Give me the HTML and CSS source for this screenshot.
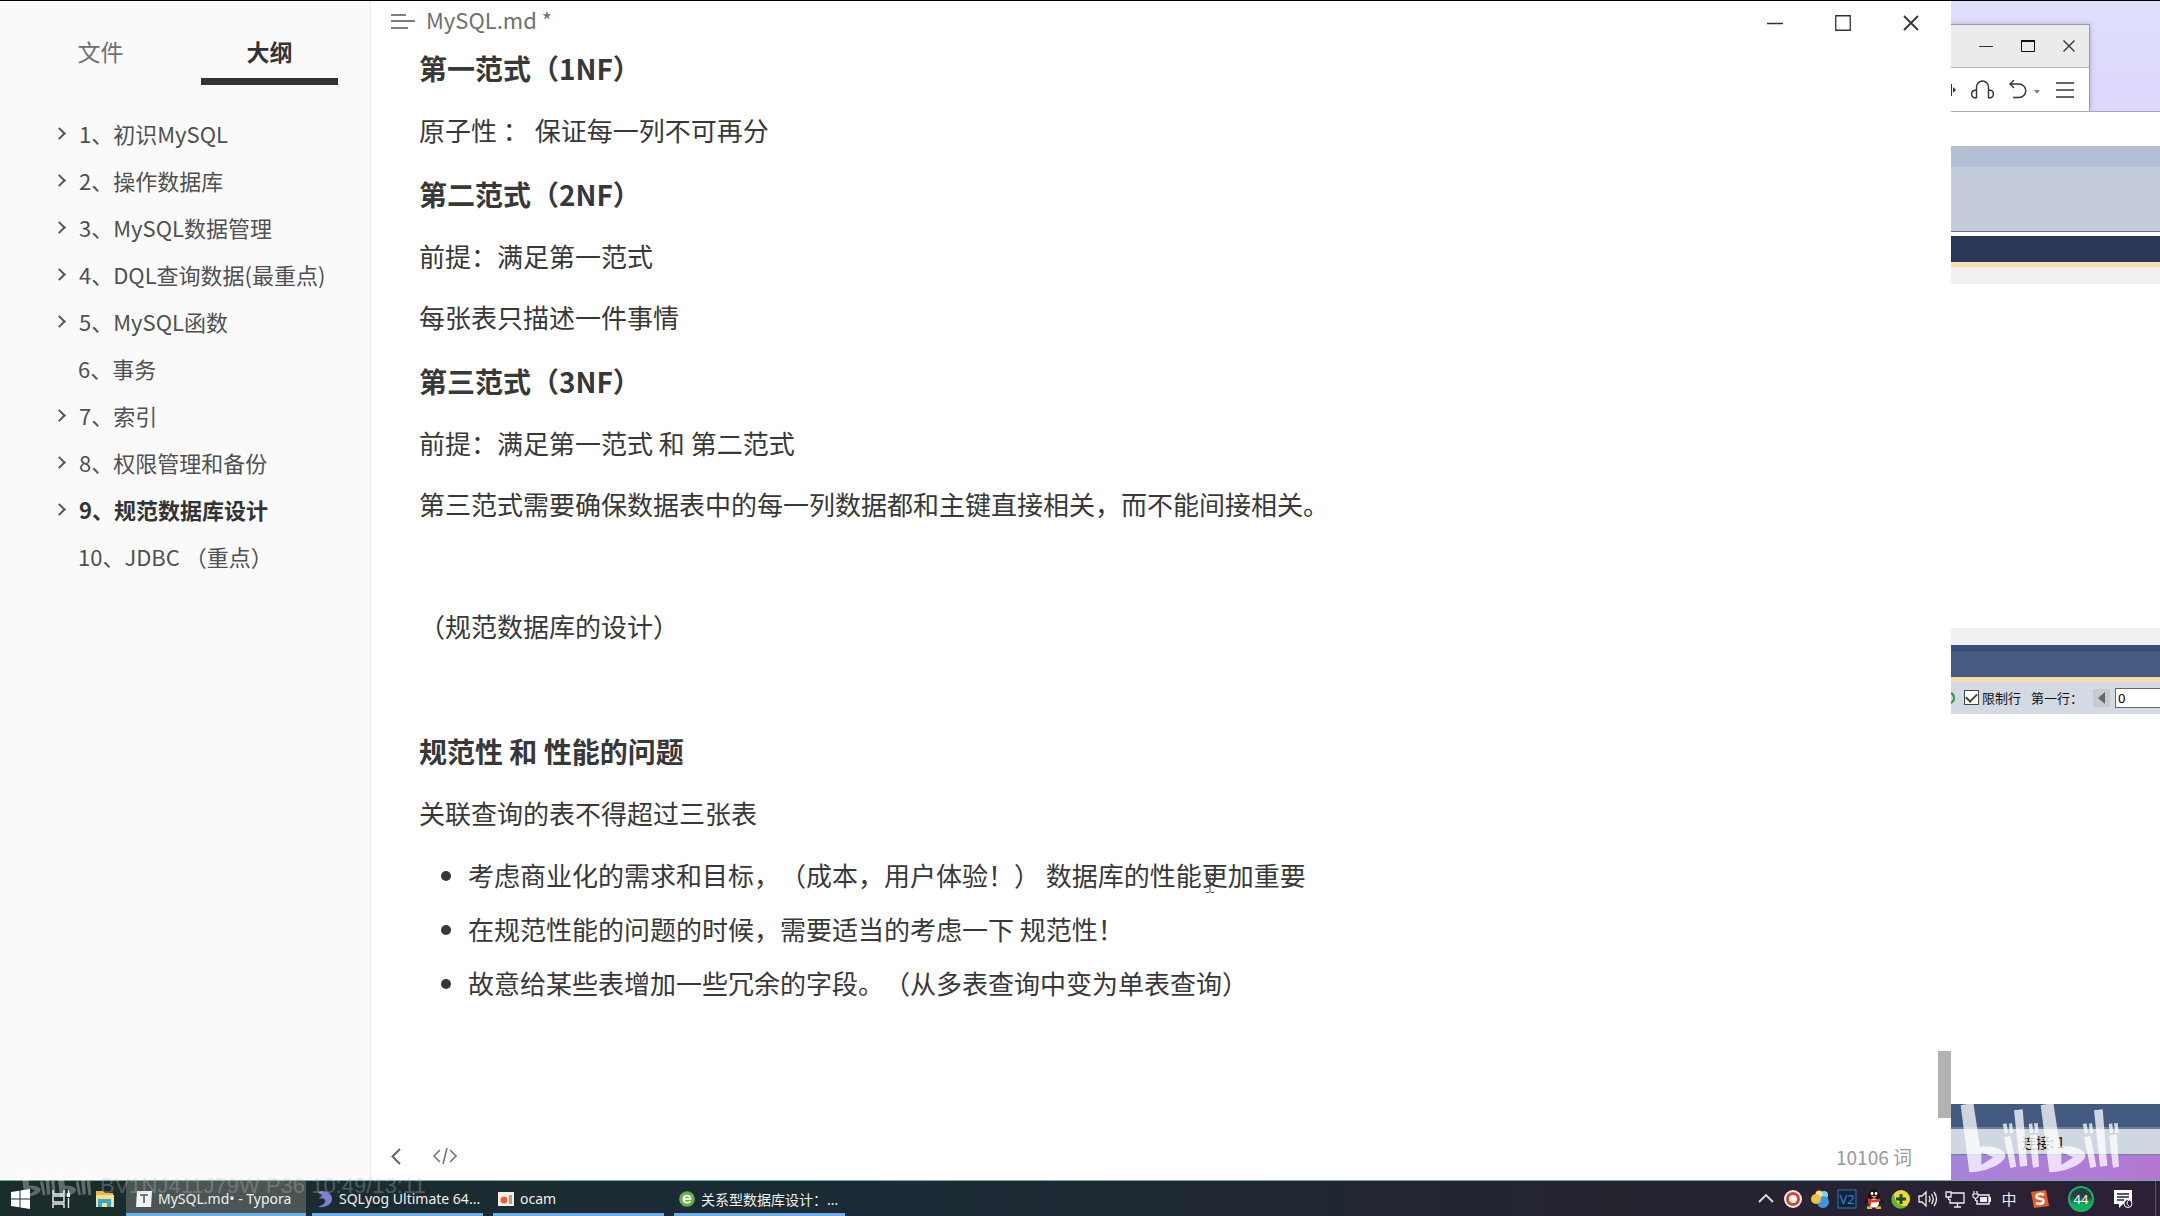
FILE: index.html
```html
<!DOCTYPE html>
<html lang="zh-CN">
<head>
<meta charset="utf-8">
<title>MySQL.md* - Typora</title>
<link rel="stylesheet" href="styles.css">
</head>
<body>
<div class="screen">
  <aside class="sidebar">
    <div class="tabs">
      <button class="tab">文件</button>
      <button class="tab tab-active">大纲</button>
    </div>
    <nav class="outline">
      <a class="item branch" href="#">1、初识MySQL</a>
      <a class="item branch" href="#">2、操作数据库</a>
      <a class="item branch" href="#">3、MySQL数据管理</a>
      <a class="item branch" href="#">4、DQL查询数据(最重点)</a>
      <a class="item branch" href="#">5、MySQL函数</a>
      <a class="item" href="#">6、事务</a>
      <a class="item branch" href="#">7、索引</a>
      <a class="item branch" href="#">8、权限管理和备份</a>
      <a class="item branch current" href="#">9、规范数据库设计</a>
      <a class="item" href="#">10、JDBC （重点）</a>
    </nav>
  </aside>

  <main class="editor">
    <header class="titlebar">
      <button class="menu" aria-label="菜单"><svg width="24" height="16" viewBox="0 0 24 16"><path d="M0 2H15M0 8H24M0 15H17" stroke="#555" stroke-width="1.5"/></svg></button>
      <span class="filename">MySQL.md *</span>
      <div class="win-buttons">
        <button aria-label="最小化"><svg width="16" height="16" viewBox="0 0 16 16"><path d="M0 8.5H16" stroke="#333" stroke-width="1.5"/></svg></button>
        <button aria-label="最大化"><svg width="16" height="16" viewBox="0 0 16 16"><path d="M.75 .75H15.25V15.25H.75Z" fill="none" stroke="#333" stroke-width="1.3"/></svg></button>
        <button aria-label="关闭"><svg width="16" height="16" viewBox="0 0 16 16"><path d="M1 1L15 15M15 1L1 15" stroke="#333" stroke-width="1.8"/></svg></button>
      </div>
    </header>
    <article class="doc">
      <h4>第一范式（1NF）</h4>
      <p>原子性 ： 保证每一列不可再分</p>
      <h4>第二范式（2NF）</h4>
      <p>前提：满足第一范式</p>
      <p>每张表只描述一件事情</p>
      <h4>第三范式（3NF）</h4>
      <p>前提：满足第一范式 和 第二范式</p>
      <p>第三范式需要确保数据表中的每一列数据都和主键直接相关，而不能间接相关。</p>
      <p></p>
      <p>（规范数据库的设计）</p>
      <p></p>
      <h4>规范性 和 性能的问题</h4>
      <p>关联查询的表不得超过三张表</p>
      <ul>
        <li>考虑商业化的需求和目标，（成本，用户体验！） 数据库的性能<span class="caret-host">更<svg class="ibeam" width="8" height="18" viewBox="0 0 8 18"><path d="M0 .5H3L4 1.5L5 .5H8M4 1V17M0 17.5H3L4 16.5L5 17.5H8" fill="none" stroke="#444"/></svg></span>加重要</li>
        <li>在规范性能的问题的时候，需要适当的考虑一下 规范性！</li>
        <li>故意给某些表增加一些冗余的字段。（从多表查询中变为单表查询）</li>
      </ul>
    </article>
    <footer class="editor-foot">
      <button aria-label="返回"><svg width="10" height="17" viewBox="0 0 10 17"><path d="M9 1L1.500 8.500L9 16" fill="none" stroke="#666" stroke-width="2"/></svg></button>
      <button aria-label="源代码模式"><svg width="24" height="18" viewBox="0 0 24 18"><path d="M7 3L1 9L7 15M17 3L23 9L17 15M14 1L10 17" fill="none" stroke="#777" stroke-width="1.6"/></svg></button>
      <span class="words">10106 词</span>
    </footer>
    <div class="thumb"></div>
  </main>

  <section class="desktop">
    <div class="wallpaper">
      <div class="mini">
        <div class="mini-title">
          <svg class="mini-edge" width="3" height="8" viewBox="0 0 3 8"><path d="M0 1H1.500V4H0" fill="none" stroke="#222" stroke-width="1.500"/></svg>
          <button aria-label="最小化"><svg width="14" height="12" viewBox="0 0 14 12"><path d="M0 6.500H14" stroke="#333"/></svg></button>
          <button aria-label="最大化"><svg width="14" height="12" viewBox="0 0 14 12"><path d="M.5 1H13.500V11.500H.5Z" fill="none" stroke="#111"/><path d="M0 1H14" stroke="#111" stroke-width="2"/></svg></button>
          <button aria-label="关闭"><svg width="12" height="12" viewBox="0 0 12 12"><path d="M.5 .5L11.500 11.500M11.500 .5L.5 11.500" stroke="#333" stroke-width="1.400"/></svg></button>
        </div>
        <div class="mini-tools">
          <svg class="mini-edge" width="5" height="12" viewBox="0 0 5 12"><path d="M.5 0V12" stroke="#333"/><path d="M2 3L5 6L2 9Z" fill="#333"/></svg>
          <button aria-label="耳机"><svg width="23" height="20" viewBox="0 0 23 20"><path d="M5.500 18V7A6 6 0 0 1 17.500 7V18M5.500 10C-1 10 -1 18 5.500 18M17.500 10C24 10 24 18 17.500 18" fill="none" stroke="#333" stroke-width="1.400"/></svg></button>
          <button aria-label="撤销"><svg width="32" height="19" viewBox="0 0 32 19"><path d="M5 0L1 4L5 8M1 4H10A6.700 6.700 0 0 1 10 17.500H4" fill="none" stroke="#333" stroke-width="1.400"/><path d="M25 10H31L28 13.500Z" fill="#777"/></svg></button>
          <button aria-label="菜单"><svg width="18" height="16" viewBox="0 0 18 16"><path d="M0 1H18M0 8H18M0 15H18" stroke="#333" stroke-width="1.400"/></svg></button>
        </div>
      </div>
    </div>
    <div class="band white-band"></div>
    <div class="band menu-band"></div>
    <div class="band tool-band"></div>
    <div class="band navy-band"></div>
    <div class="band pale-band"></div>
    <div class="blank query"></div>
    <div class="band pale-band"></div>
    <div class="band blue-band"></div>
    <form class="limit">
      <svg class="refresh" width="4" height="12" viewBox="0 0 4 12"><path d="M0 1C4 3 4 9 0 11" fill="none" stroke="#2f9a45" stroke-width="2"/></svg>
      <label class="check"><input type="checkbox" checked>限制行</label>
      <label for="first-row" class="first">第一行：</label>
      <button type="button" aria-label="上一页"><svg width="7" height="12" viewBox="0 0 7 12"><path d="M7 0V12L0 6Z" fill="#666"/></svg></button>
      <input id="first-row" type="text" value="0">
    </form>
    <div class="blank result"></div>
    <div class="band blue-foot"></div>
    <div class="status"><span>连接: 1</span></div>
    <div class="band purple-band"></div>
    <svg class="brand" viewBox="480 219 480 216" aria-label="bilibili">
      <g id="brand-half" fill="#fff">
        <path fill-rule="evenodd" d="M482 229L520 221L540 353C572 349 612 358 616 378C618 402 562 428 508 430ZM544 369V408L580 385Z"/>
        <path d="M612 325L632 321L649 413L631 417ZM642 244L668 241L682 410L660 413ZM687 320L710 316L717 413L699 416Z"/>
        <path d="M608 285L620 283L624 312L614 314ZM627 284L636 282L640 312L630 313ZM686 285L697 283L699 311L690 313ZM702 283L713 282L716 311L706 313Z"/>
      </g>
      <use href="#brand-half" x="240"/>
    </svg>
  </section>
</div>

<footer class="taskbar">
  <button class="sys" aria-label="开始"><svg width="20" height="20" viewBox="0 0 20 20"><path d="M0 3L8.500 1.800V9.500H0ZM9.500 1.600L19 0V9.500H9.500ZM0 10.500H8.500V18.200L0 17ZM9.500 10.500H19V20L9.500 18.400Z" fill="#fff"/></svg></button>
  <button class="sys" aria-label="任务视图"><svg width="20" height="20" viewBox="0 0 20 20"><path d="M2 1V5H13V1M2 19V15H13V19M2 7H13V13H2ZM17.500 1V4M17.500 9V19" fill="none" stroke="#eee" stroke-width="1.400"/><path d="M16 4H19V8H16Z" fill="#eee"/></svg></button>
  <button class="sys" aria-label="文件资源管理器"><svg width="20" height="20" viewBox="0 0 20 20"><path d="M1 2H8L10 4H18V18H1Z" fill="#e9b84c"/><path d="M1 6H19V18H1Z" fill="#fbe08a"/><path d="M3 18V10H16V18H12V14H7V18Z" fill="#35a5dc"/></svg></button>
  <button class="task task-active"><svg width="16" height="16" viewBox="0 0 16 16"><path d="M1 0H16L15 16H0Z" fill="#f3f3f3"/><path d="M4 4H12M8 4V12" stroke="#555" stroke-width="1.500"/></svg><span>MySQL.md• - Typora</span></button>
  <button class="task"><svg width="16" height="18" viewBox="0 0 16 18"><path d="M1 2C8 -1 15 3 15 9C15 14 9 18 1 17C6 15 9 13 8 10C7 8 4 8 2 9C3 7 5 6 5 5C4 4 2 4 1 2Z" fill="#7f7fd6"/></svg><span>SQLyog Ultimate 64...</span></button>
  <button class="task"><svg width="16" height="14" viewBox="0 0 16 14"><path d="M0 0H16V14H0Z" fill="#f2eeee"/><circle cx="6" cy="8" r="3.500" fill="#e3622a"/><path d="M11 3H14V12H11Z" fill="#d9906c"/></svg><span>ocam</span></button>
  <button class="task"><svg width="16" height="16" viewBox="0 0 16 16"><circle cx="8" cy="8" r="7.800" fill="#62b545"/><path d="M4.500 8H11.500C11.500 3.500 4.500 3.500 4.500 8C4.500 12.500 10 12.500 11.500 10" fill="none" stroke="#fff" stroke-width="1.800"/></svg><span>关系型数据库设计：...</span></button>
  <div class="tray">
    <svg viewBox="0 0 20 20"><path d="M3 13L10 6L17 13" fill="none" stroke="#ddd" stroke-width="1.800"/></svg>
    <svg viewBox="0 0 20 20"><circle cx="10" cy="10" r="9" fill="#eee"/><circle cx="10" cy="10" r="5.500" fill="#fff" stroke="#d8452f" stroke-width="3"/></svg>
    <svg viewBox="0 0 20 20"><circle cx="14" cy="6" r="4" fill="#8cc8f4"/><circle cx="13" cy="13" r="6" fill="#3d95e6"/><circle cx="9" cy="5" r="3.500" fill="#fbe08e"/><circle cx="6" cy="10" r="5" fill="#f2bd4a"/></svg>
    <svg viewBox="0 0 20 20"><path d="M1 1H19V19H1Z" fill="#12233c" stroke="#2e78b8"/><text x="10" y="15" text-anchor="middle" font-size="13" fill="#3787c8">V2</text></svg>
    <svg viewBox="0 0 20 20"><ellipse cx="10" cy="9" rx="6" ry="8.500" fill="#111"/><path d="M4 8L0 14L4 13ZM16 8L20 14L16 13Z" fill="#111"/><ellipse cx="10" cy="14" rx="5" ry="4.500" fill="#fff"/><ellipse cx="8" cy="4.500" rx="1.400" ry="1.800" fill="#fff"/><ellipse cx="12" cy="4.500" rx="1.400" ry="1.800" fill="#fff"/><path d="M7 7H13L10 9Z" fill="#f5a623"/><path d="M3.500 9Q10 12.500 16.500 9V12Q10 14.500 7 13V16H4.500Z" fill="#e0362c"/><path d="M3 17.500Q6 16.500 8.500 18.500L8 20H3ZM17 17.500Q14 16.500 11.500 18.500L12 20H17Z" fill="#f0b040"/></svg>
    <svg viewBox="0 0 20 20"><circle cx="10" cy="10" r="9" fill="#f1d82f"/><path d="M3 4A9 9 0 0 0 16 17C8 18 3 12 3 4Z" fill="#65b32e"/><path d="M10 5V15M5 10H15" stroke="#174d1e" stroke-width="3"/></svg>
    <svg viewBox="0 0 20 20"><path d="M1 7H4L8 3V17L4 13H1ZM11 7Q13 10 11 13M13.500 5Q17 10 13.500 15M16 3Q21 10 16 17" fill="none" stroke="#eee" stroke-width="1.300"/></svg>
    <svg viewBox="0 0 20 20"><path d="M6 4H19V14H5V10M9 18H16M12.500 14V18M1 3H6V8H1ZM3.500 8V11" fill="none" stroke="#eee" stroke-width="1.300"/></svg>
    <svg viewBox="0 0 20 20"><path d="M6 6H17V15H5V11" fill="none" stroke="#eee" stroke-width="1.500"/><path d="M8 8H15V13H8ZM17 8H19V13H17Z" fill="#eee"/><path d="M2 2V5M5 2V5M1 5H6V8L4 9.500H3L1 8ZM3.500 9V12" fill="none" stroke="#eee" stroke-width="1.200"/></svg>
    <span class="ime">中</span>
    <svg class="sogou" viewBox="0 0 20 20"><path d="M1 3L16 1L19 17L4 19Z" fill="#ee5a23"/><path d="M14 5.500C9 4 6 5.500 6.500 8C7 10.500 13.500 9 13.500 12C13.500 15 9 15.500 6 14" fill="none" stroke="#fff" stroke-width="2.600"/></svg>
    <span class="badge">44</span>
    <svg class="notes" viewBox="0 0 20 20"><path d="M1 1H19V15H10L6 19V15H1Z" fill="#fff"/><path d="M4 5H16M4 8H16M4 11H11" stroke="#2a2235" stroke-width="1.300"/><circle cx="15" cy="14.500" r="4" fill="#2a2235" stroke="#fff"/><path d="M16 11Q12 14 16 17" fill="none" stroke="#fff"/></svg>
  </div>
  <div class="stamp">
    <svg viewBox="480 219 480 216" aria-hidden="true"><use href="#brand-half"/><use href="#brand-half" x="240"/></svg>
    <span>BV1NJ411J79W P36 10:49/13:11</span>
  </div>
</footer>
</body>
</html>
```
FILE: styles.css
```css
* { box-sizing: border-box; }

body {
  margin: 0;
  min-height: 100vh;
  display: flex;
  flex-direction: column;
  border-top: 1px solid #000;
  background: #fff;
  color: #383838;
  font-family: "Noto Sans CJK SC", "Noto Sans", sans-serif;
  text-spacing-trim: space-all;
}

button {
  border: 0;
  padding: 0;
  background: none;
  font: inherit;
  color: inherit;
}

svg { display: block; }

.screen { flex: 1; display: flex; }

/* outline panel */
.sidebar {
  width: 371px;
  flex: none;
  background: #fafafa;
  border-right: 1px solid #e6e6e6;
  font-size: 22px;
}
.tabs {
  display: flex;
  justify-content: space-between;
  padding: 22px 32px 0;
}
.tab {
  width: 137px;
  height: 62px;
  border-bottom: 7px solid transparent;
  color: #707070;
  font-size: 23px;
  line-height: 54px;
}
.tab-active { color: #333; font-weight: 700; border-color: #333; }
.outline { padding: 25px 0 0 57px; }
.item {
  display: flex;
  align-items: center;
  line-height: 47px;
  padding-left: 21px;
  color: #505050;
  text-decoration: none;
  white-space: nowrap;
}
.branch { padding-left: 0; }
.branch::before {
  content: "";
  width: 7px;
  height: 7px;
  margin-right: 13px;
  border: solid #555;
  border-width: 2px 2px 0 0;
  rotate: 45deg;
  translate: -2px 0;
}
.current { font-weight: 700; color: #333; }

/* editor */
.editor {
  flex: 1;
  position: relative;
  display: flex;
  flex-direction: column;
}
.titlebar {
  display: flex;
  align-items: center;
  height: 42px;
  padding: 0 6px 2px 20px;
}
.filename { margin-left: 11px; padding-bottom: 4px; font-size: 22px; line-height: 30px; color: #707070; }
.win-buttons { display: flex; margin-left: auto; }
.win-buttons button { width: 68px; height: 36px; padding-top: 4px; display: grid; place-items: center; }

.doc {
  flex: 1;
  display: flex;
  flex-direction: column;
  gap: 21px;
  padding: 3px 48px 0;
  font-size: 26px;
}
.doc h4, .doc p, .doc ul { margin: 0; }
.doc h4 { font-size: 28px; line-height: 44px; }
.doc p { height: 40px; line-height: 38px; }
.doc ul { display: flex; flex-direction: column; gap: 14px; padding: 0 0 0 49px; }
.doc li { height: 40px; line-height: 39px; }
.caret-host { position: relative; }
.ibeam { position: absolute; left: 4px; bottom: 0; }

.editor-foot {
  display: flex;
  align-items: center;
  gap: 32px;
  height: 48px;
  padding: 0 39px 0 20px;
}
.words { margin-left: auto; font-size: 19px; color: #999; }
.thumb {
  position: absolute;
  right: 0;
  bottom: 62px;
  width: 13px;
  height: 67px;
  background: #b2b2b2;
}

/* windows behind the editor */
.desktop {
  position: relative;
  width: 209px;
  flex: none;
  display: flex;
  flex-direction: column;
}
.wallpaper {
  height: 111px;
  padding-top: 23px;
  background: linear-gradient(#dfdffe, #dcd7fb);
  border-bottom: 1px solid #a9a7b8;
}
.mini {
  width: 139px;
  border: solid #9a99ab;
  border-width: 1px 1px 0 0;
  background: #fff;
  box-shadow: 0 0 5px rgba(60, 50, 110, .3);
  clip-path: inset(-6px -6px 0 0);
}
.mini-title, .mini-tools { display: flex; align-items: center; padding-right: 14px; }
.mini-title { height: 43px; background: #ebebeb; border-bottom: 1px solid #b5b5bb; justify-content: flex-end; gap: 28px; }
.mini-title .mini-edge { margin: -12px auto 0 0; }
.mini-tools { height: 43px; gap: 15px; }
.band { flex: none; }
.white-band { height: 34px; }
.menu-band { height: 21px; background: #b5bfd3; }
.tool-band { height: 65px; background: #c4ccdc; border-bottom: 1px solid #687080; }
.navy-band { height: 31px; margin-top: 4px; background: #2a3858; border-bottom: 5px solid #fadfae; }
.pale-band { height: 17px; background: #f0eff2; }
.blank { background: #fff; }
.query { flex: 344; }
.result { flex: 391; }
.blue-band { height: 37px; background: #475a80; border-top: 6px solid #3b4a78; border-bottom: 5px solid #f4dfa9; }
.limit {
  display: flex;
  align-items: center;
  height: 32px;
  flex: none;
  background: #d3dae4;
  font-size: 13px;
  color: #111;
  overflow: hidden;
}
.check { display: flex; align-items: center; gap: 3px; margin-left: 9px; white-space: nowrap; }
.refresh { flex: none; }
.check input {
  appearance: none;
  width: 15px;
  height: 15px;
  margin: 0;
  border: 1px solid #444;
  background: #fff;
  display: grid;
  place-items: center;
}
.check input::before {
  content: "";
  width: 9px;
  height: 5px;
  border: solid #444;
  border-width: 0 0 2px 2px;
  rotate: -45deg;
  translate: 0 -1px;
}
.first { margin-left: 10px; white-space: nowrap; }
.limit button { width: 17px; height: 18px; flex: none; margin-left: 10px; background: #c9cbcf; display: grid; place-items: center; }
.limit input[type="text"] {
  width: 60px;
  flex: none;
  height: 20px;
  margin-left: 5px;
  padding: 0 2px;
  border: 1px solid #666;
  border-right: 0;
  background: #fff;
  font: 13px "Noto Sans", sans-serif;
}
.blue-foot { height: 23px; background: #425a80; }
.status {
  height: 28px;
  flex: none;
  padding-left: 71px;
  border: solid #70809a;
  border-width: 2px 0 1px;
  background: #cfd7e2;
  font-size: 14px;
  line-height: 26px;
  color: #111;
}
.purple-band { height: 25px; background: linear-gradient(90deg, #a783dc, #b478d0); }
.brand {
  position: absolute;
  left: 9px;
  bottom: 6px;
  width: 160px;
  height: 72px;
  opacity: .75;
}

/* taskbar */
.taskbar {
  position: relative;
  display: flex;
  align-items: stretch;
  height: 36px;
  padding: 0 4px 0 11px;
  border-top: 1px solid #76aaa8;
  background: linear-gradient(90deg, #1b2c2c, #1b2b35 40%, #24242f 75%, #2c2036);
  color: #f0f0f0;
  font: 14px "Noto Sans", "Noto Sans CJK SC", sans-serif;
}
.sys { width: 20px; margin-right: 22px; display: grid; place-items: center; }
.sys:nth-child(2) { margin-left: -2px; margin-right: 24px; }
.sys:nth-child(3) { margin-right: 11px; }
.task {
  width: 171px;
  display: flex;
  align-items: center;
  gap: 6px;
  padding: 3px 0 0 5px;
  margin-right: 10px;
  border-bottom: 3px solid #6dade8;
  white-space: nowrap;
}
.task-active { width: 180px; padding-left: 10px; margin-right: 6px; background: #4b5654; }
.task svg { flex: none; }
.tray { display: flex; align-items: center; gap: 7px; margin-left: auto; padding-right: 22px; border-right: 1px solid #5c5568; }
.tray svg { width: 20px; height: 20px; }
.ime { width: 20px; font-size: 15px; text-align: center; }
.tray .sogou { margin-left: 4px; }
.badge {
  width: 26px;
  height: 26px;
  margin-left: 11px;
  border: 2px solid #17b26a;
  border-radius: 50%;
  background: linear-gradient(#26423f 40%, #12ab62 75%);
  color: #fff;
  font-size: 13px;
  line-height: 22px;
  text-align: center;
}
.tray .notes { margin-left: 12px; }
.stamp {
  position: absolute;
  left: 20px;
  top: -15px;
  display: flex;
  align-items: flex-end;
  gap: 8px;
  opacity: .3;
  color: #c4c4c4;
  font: 22px/24px "Liberation Sans", sans-serif;
  white-space: nowrap;
  pointer-events: none;
}
.stamp svg { width: 72px; height: 32px; }
```
